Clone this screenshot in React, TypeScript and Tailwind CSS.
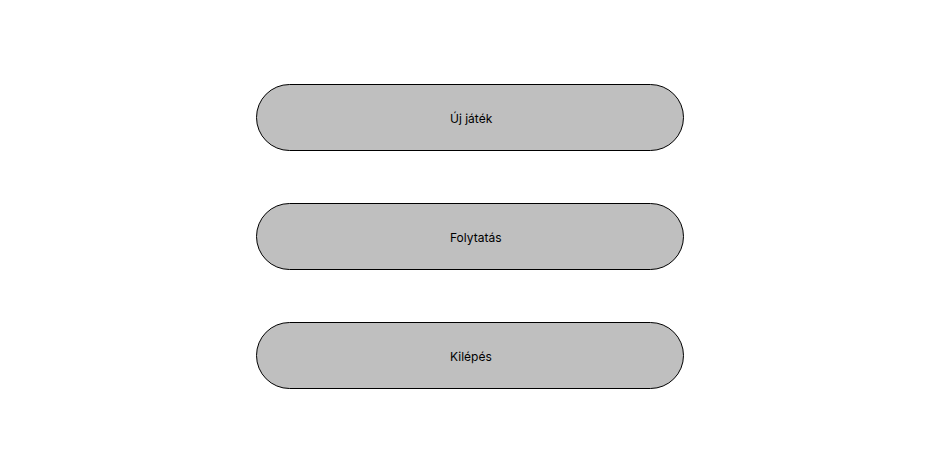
export default function App() {
  const items = ["Új játék", "Folytatás", "Kilépés"];
  return (
    <div className="w-full h-screen bg-white flex flex-col items-center justify-center gap-[52px] font-['Inter',sans-serif]">
      {items.map((label) => (
        <button
          key={label}
          className="w-[428px] h-[67px] rounded-full border border-black bg-[#bfbfbf] text-[12px] leading-none pt-[2px] pl-[193px] text-black flex items-center justify-start"
        >
          {label}
        </button>
      ))}
    </div>
  );
}
